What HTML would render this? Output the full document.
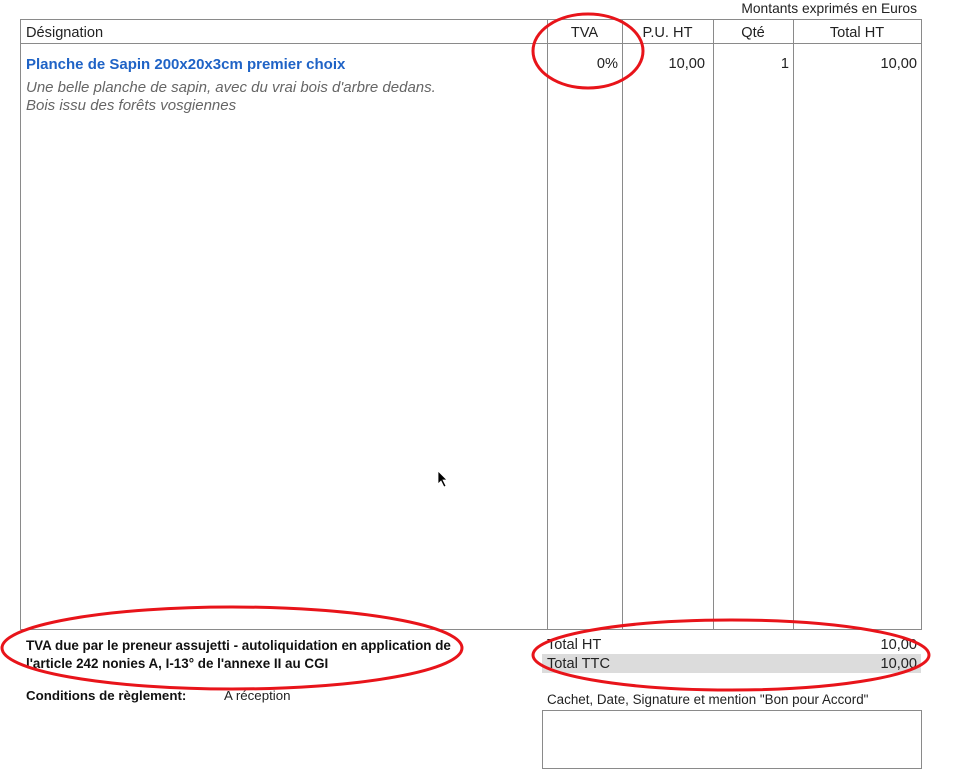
<!DOCTYPE html>
<html><head><meta charset="utf-8"><style>
body{margin:0;width:957px;height:768px;background:#fff;font-family:"Liberation Sans",Arial,sans-serif;position:relative;overflow:hidden;color:#222}
.a{position:absolute;white-space:nowrap}
.l{position:absolute;background:#8a8a8a}
</style></head><body>
<div class="a" style="right:40px;top:1px;font-size:13.8px">Montants exprimés en Euros</div>
<div style="position:absolute;left:20px;top:19px;width:900px;height:609px;border:1px solid #8a8a8a"></div>
<div class="l" style="left:20px;top:43px;width:901px;height:1px"></div>
<div class="l" style="left:547px;top:19px;width:1px;height:610px"></div>
<div class="l" style="left:622px;top:19px;width:1px;height:610px"></div>
<div class="l" style="left:713px;top:19px;width:1px;height:610px"></div>
<div class="l" style="left:793px;top:19px;width:1px;height:610px"></div>
<div class="a" style="left:26px;top:25px;font-size:14.6px">Désignation</div>
<div class="a" style="left:547px;width:75px;text-align:center;top:25px;font-size:14.6px">TVA</div>
<div class="a" style="left:622px;width:91px;text-align:center;top:25px;font-size:14.6px">P.U. HT</div>
<div class="a" style="left:713px;width:80px;text-align:center;top:25px;font-size:14.6px">Qté</div>
<div class="a" style="left:793px;width:128px;text-align:center;top:25px;font-size:14.6px">Total HT</div>
<div class="a" style="left:26px;top:56px;font-size:15px;font-weight:bold;color:#1f63c6">Planche de Sapin 200x20x3cm premier choix</div>
<div class="a" style="left:26px;top:79px;font-size:15px;font-style:italic;color:#666;line-height:18px">Une belle planche de sapin, avec du vrai bois d'arbre dedans.<br>Bois issu des forêts vosgiennes</div>
<div class="a" style="right:339px;top:56px;font-size:14.6px">0%</div>
<div class="a" style="right:252px;top:56px;font-size:14.6px">10,00</div>
<div class="a" style="right:168px;top:56px;font-size:14.6px">1</div>
<div class="a" style="right:40px;top:56px;font-size:14.6px">10,00</div>
<div class="a" style="left:26px;top:637px;font-size:13.4px;font-weight:bold;line-height:18px;color:#111">TVA due par le preneur assujetti - autoliquidation en application de<br>l'article 242 nonies A, I-13° de l'annexe II au CGI</div>
<div class="a" style="left:26px;top:688px;font-size:13.3px;font-weight:bold;color:#111">Conditions de règlement:</div>
<div class="a" style="left:224px;top:688px;font-size:13.3px">A réception</div>
<div class="a" style="left:547px;top:637px;font-size:14.6px">Total HT</div>
<div class="a" style="right:40px;top:637px;font-size:14.6px">10,00</div>
<div style="position:absolute;left:542px;top:654px;width:379px;height:19px;background:#dcdcdc"></div>
<div class="a" style="left:547px;top:656px;font-size:14.6px">Total TTC</div>
<div class="a" style="right:40px;top:656px;font-size:14.6px">10,00</div>
<div class="a" style="left:547px;top:692px;font-size:13.4px">Cachet, Date, Signature et mention "Bon pour Accord"</div>
<div style="position:absolute;left:542px;top:710px;width:378px;height:57px;border:1px solid #8a8a8a"></div>
<svg width="957" height="768" style="position:absolute;left:0;top:0">
<g fill="none" stroke="#e8141a" stroke-width="3">
<ellipse cx="588" cy="51" rx="55" ry="37"/>
<ellipse cx="232" cy="648" rx="230" ry="41"/>
<ellipse cx="731" cy="655" rx="198" ry="35"/>
</g>
<path d="M438 471 L438 484 L441 481 L444 487 L446 486 L443 480 L447 480 Z" fill="#000" stroke="#fff" stroke-width="0.8"/>
</svg>
</body></html>
